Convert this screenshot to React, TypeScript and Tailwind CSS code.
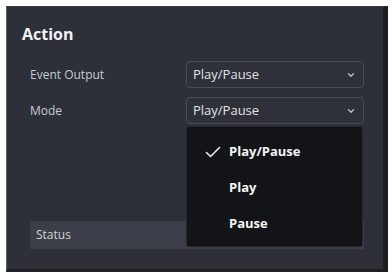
function Chevron() {
  return (
    <svg width="8" height="6" viewBox="0 0 8 6" fill="none">
      <path d="M1.5 1.8 L4 4.2 L6.5 1.8" stroke="#b9bcc4" strokeWidth="1.4" strokeLinecap="round" strokeLinejoin="round" />
    </svg>
  );
}

function Select({ value }: { value: string }) {
  return (
    <div className="h-[27px] w-[178px] rounded-[4px] border border-[#4a4d56] bg-[#2e3139] flex items-center justify-between pl-[6px] pr-[8px]">
      <span className="text-[13px] font-medium text-[#e2e3e6]">{value}</span>
      <Chevron />
    </div>
  );
}

const options = ["Play/Pause", "Play", "Pause"];

export default function App() {
  return (
    <div className="w-[392px] h-[276px] bg-white pt-[6px] pl-[6px] font-['Open_Sans',sans-serif]">
      <div className="w-[382px] h-[266px] bg-[#2d3039] border-l border-t border-l-[#5b5e66] border-t-[#3a3d45] border-r-[5px] border-b-[3px] border-r-[#1c1e23] border-b-[#1e2026] pl-[15px] pt-[17px]">
        {/* Title */}
        <h2 className="text-[16px] leading-[20px] font-bold text-[#f1f2f4]">Action</h2>

        {/* Rows */}
        <div className="ml-[8px] mt-[17px] flex flex-col gap-[9px]">
          <div className="grid grid-cols-[156px_178px] items-center">
            <span className="text-[12px] font-medium text-[#c9cbd1]">Event Output</span>
            <Select value="Play/Pause" />
          </div>
          <div className="grid grid-cols-[156px_178px] items-center">
            <span className="text-[12px] font-medium text-[#c9cbd1]">Mode</span>
            <div className="relative">
              <Select value="Play/Pause" />
              {/* Open menu */}
              <div className="absolute left-0 top-[29px] z-10 w-[177px] h-[121px] rounded-[3px] bg-[#131417] border border-[#26282d] pt-[7px]">
                {options.map((o, i) => (
                  <div key={o} className="h-[36px] flex items-center">
                    <div className="w-[42px] flex justify-end pr-[8px]">
                      {i === 0 && (
                        <svg width="16" height="12" viewBox="0 0 16 12" fill="none">
                          <path d="M1.5 6.5 L5.5 10.5 L14.5 1.5" stroke="#e8e9ec" strokeWidth="1.6" strokeLinecap="round" strokeLinejoin="round" />
                        </svg>
                      )}
                    </div>
                    <span className="text-[13px] font-bold text-[#f3f4f6]">{o}</span>
                  </div>
                ))}
              </div>
            </div>
          </div>
        </div>

        {/* Status */}
        <div className="ml-[8px] mt-[97px] w-[334px] h-[28px] bg-[#3b3e48] flex items-center pl-[6px]">
          <span className="text-[12px] font-medium text-[#d3d5da]">Status</span>
        </div>
      </div>
    </div>
  );
}
